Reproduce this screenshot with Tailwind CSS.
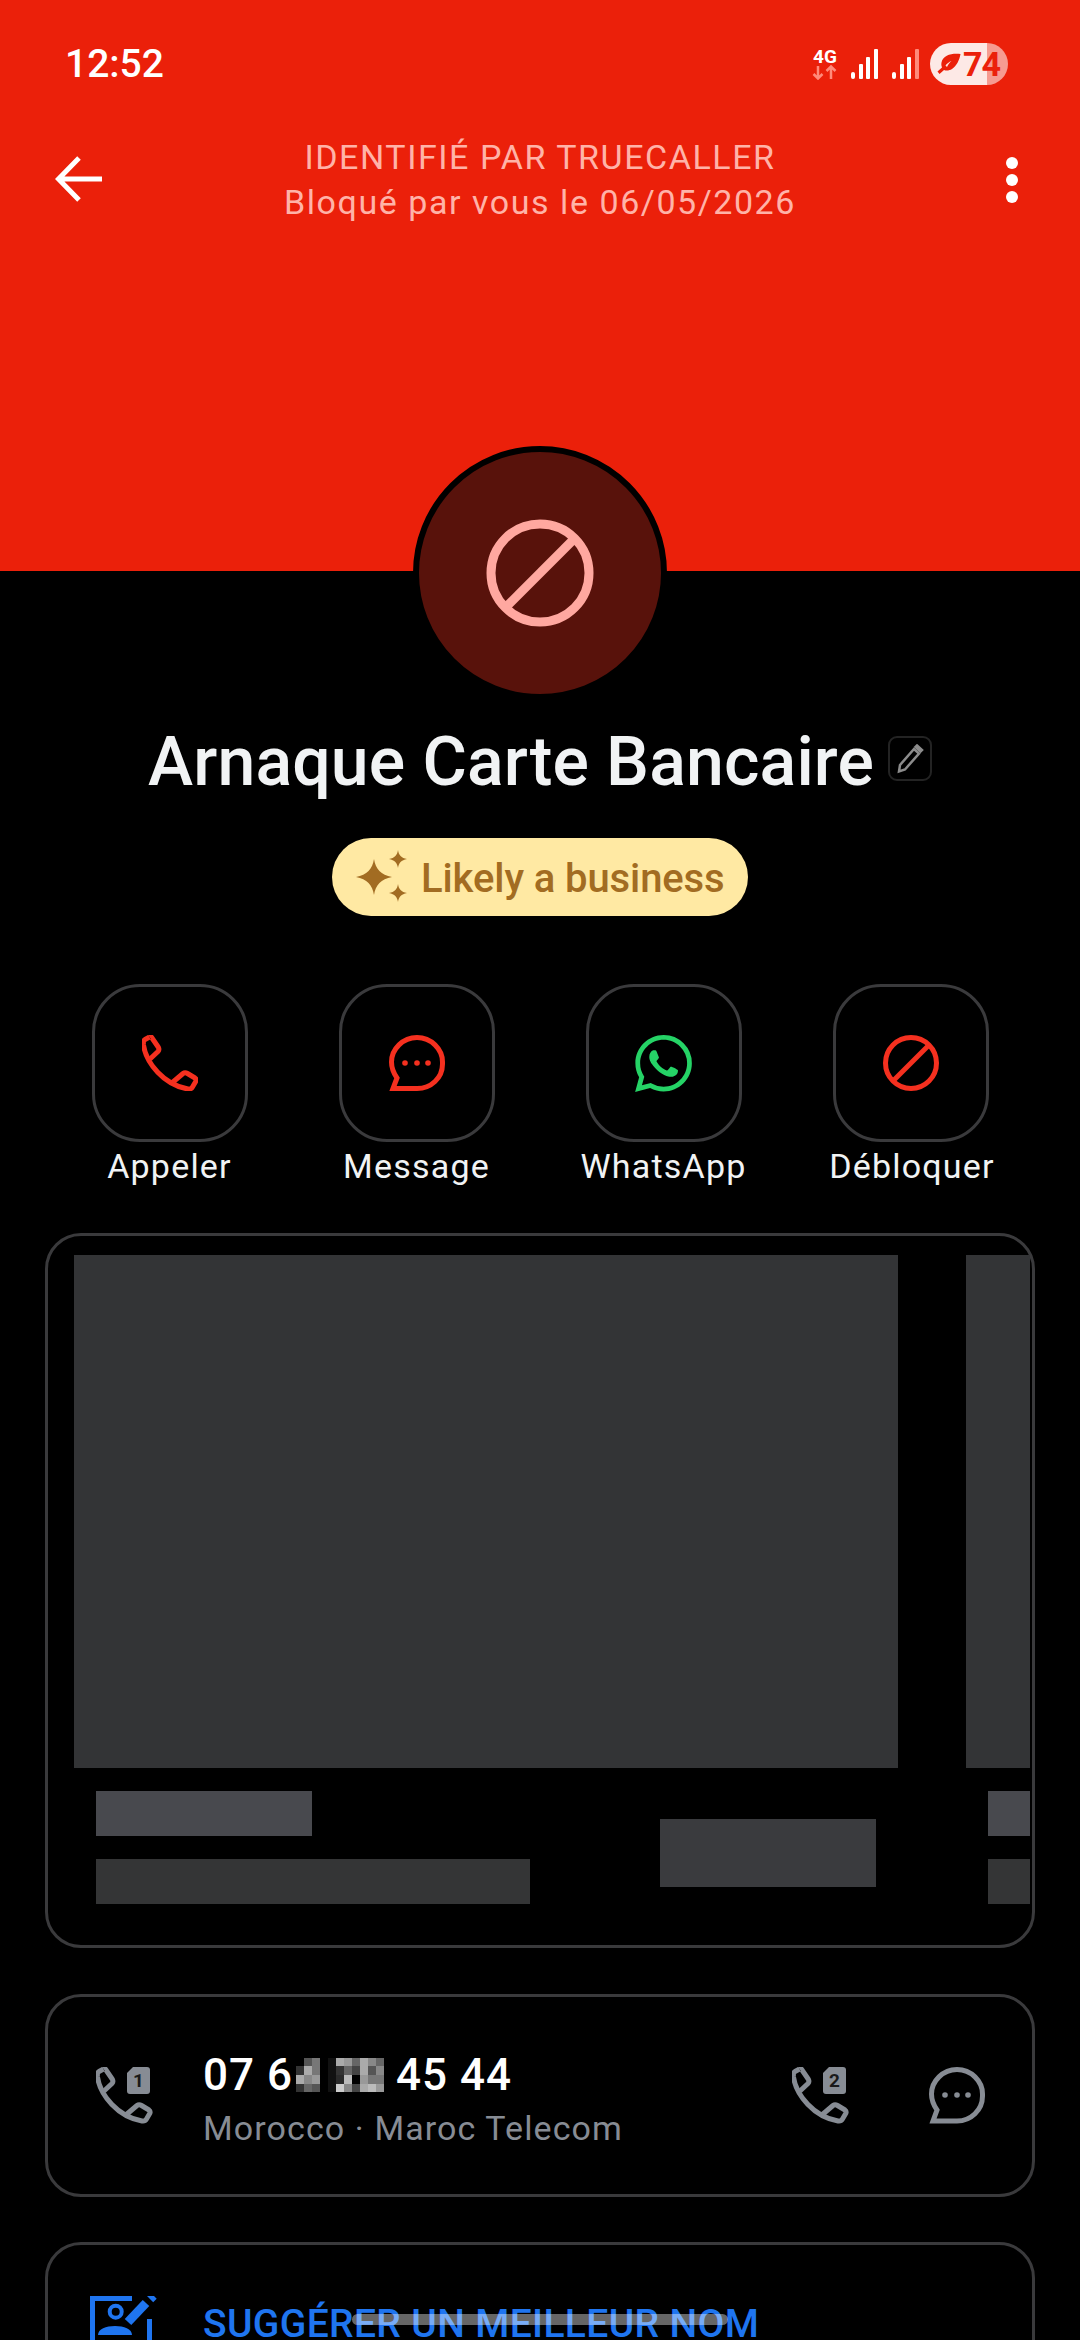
<!DOCTYPE html>
<html lang="fr">
<head>
  <meta charset="UTF-8" />
  <meta name="viewport" content="width=device-width, initial-scale=1.0"/>
  <title>Arnaque Carte Bancaire</title>
  <script src="https://cdn.jsdelivr.net/npm/@tailwindcss/browser@4"></script>
</head>
<body class="bg-black font-['Roboto',sans-serif]">
<div class="relative w-[1080px] h-[2340px] overflow-hidden bg-black text-white">

  <!-- HEADER -->
  <header class="h-[571px] bg-[#eb200a]">
    <!-- status bar -->
    <div class="flex justify-between items-start pt-[43px] pl-[65px] pr-[72px] h-[85px]">
      <span class="text-[39px] leading-[42px] font-medium">12:52</span>
      <div class="flex items-center h-[42px]">
        <div class="flex flex-col items-center w-[26px]">
          <span class="text-[19px] leading-[17px] font-bold">4G</span>
          <svg width="26" height="15" viewBox="0 0 26 15" fill="none" stroke="#ff8a7a" stroke-width="2.500">
            <path d="M6 1v12M1.500 9l4.500 4.500L10.500 9M19 14V2M14.500 6L19 1.500 23.500 6"/>
          </svg>
        </div>
        <svg class="ml-[13px]" width="27" height="30" viewBox="0 0 27 30" fill="#fff">
          <rect x="0" y="23" width="4" height="7" rx="2"/><rect x="8" y="15" width="4" height="15" rx="1"/><rect x="15" y="8" width="4" height="22" rx="1"/><rect x="23" y="0" width="4" height="30" rx="1"/>
        </svg>
        <svg class="ml-[14px]" width="27" height="30" viewBox="0 0 27 30" fill="#fff">
          <rect x="0" y="23" width="4" height="7" rx="2"/><rect x="8" y="15" width="4" height="15" rx="1"/><rect x="15" y="8" width="4" height="22" rx="1"/><rect x="23" y="0" width="4" height="30" rx="1" fill="#ff8a7a"/>
        </svg>
        <div class="relative ml-[11px] w-[78px] h-[42px] rounded-full overflow-hidden flex">
          <div class="w-[57px] bg-white/90"></div>
          <div class="flex-1 bg-white/55"></div>
          <div class="absolute inset-0 flex items-center pl-[7px] text-[#eb200a]">
            <svg width="24" height="22" viewBox="0 0 24 22" fill="currentColor">
              <path d="M23.500 1C15 0 6 2 4.500 9.500c-.4 2 0 3.500.5 5L.500 18.500 2.500 21 7 17c2.500 1 5.500.5 8-1C19.500 13 22.500 7 23.500 1zM8.500 12.500c1.500-2 3.500-3.500 6-4.500-2 1.500-3.500 3.500-4.500 6z"/>
            </svg>
            <span class="ml-[2px] text-[34px] leading-none font-bold tracking-[-1px]">74</span>
          </div>
        </div>
      </div>
    </div>
    <!-- toolbar -->
    <div class="relative flex items-center justify-center mt-[50px] h-[90px]">
      <svg class="absolute left-[55px] top-[20px]" width="48" height="48" viewBox="0 0 48 48" fill="none" stroke="#fff" stroke-width="5">
        <path d="M47 24H4M24 3L3.500 24 24 45"/>
      </svg>
      <div class="text-center text-[34px] leading-[45px] tracking-[1.550px] text-[#ffb3a8]">
        <div>IDENTIFIÉ PAR TRUECALLER</div>
        <div>Bloqué par vous le 06/05/2026</div>
      </div>
      <div class="absolute left-[1006px] top-[22px] flex flex-col gap-[5px]">
        <span class="block w-[12px] h-[12px] rounded-full bg-white"></span>
        <span class="block w-[12px] h-[12px] rounded-full bg-white"></span>
        <span class="block w-[12px] h-[12px] rounded-full bg-white"></span>
      </div>
    </div>
  </header>

  <!-- AVATAR -->
  <div class="-mt-[125px] mx-auto w-[254px] h-[254px] rounded-full border-[6px] border-black bg-[#58120b] flex items-center justify-center">
    <svg width="108" height="108" viewBox="0 0 108 108" fill="none" stroke="#ffa8a0" stroke-width="9">
      <circle cx="54" cy="54" r="49"/><path d="M20 88L88 20"/>
    </svg>
  </div>

  <!-- NAME -->
  <div class="flex items-center justify-center gap-[14px] mt-[23px] h-[78px]">
    <h1 class="text-[68px] leading-[78px] font-medium tracking-[0.150px] text-[#f1f3f4]">Arnaque Carte Bancaire</h1>
    <div class="w-[44px] h-[45px] rounded-[9px] border-2 border-[#232323] flex items-center justify-center -mt-[7px]">
      <svg width="28" height="30" viewBox="0 0 28 30" fill="none" stroke="#8c8c8c" stroke-width="2.500">
        <path d="M4 21L18 5l5 4.500L9 25.500l-6 2z"/><path d="M21 1.500l5 4.500-1.500 1.500-5-4.500z" fill="#8c8c8c"/>
      </svg>
    </div>
  </div>

  <!-- BADGE -->
  <div class="flex justify-center mt-[37px]">
    <div class="h-[78px] w-[416px] rounded-full bg-[#ffe9a3] flex items-center pl-[24px] text-[#a26c22]">
      <svg width="56" height="54" viewBox="0 0 56 54" fill="currentColor">
        <path d="M18 9c1.500 10 7 16 18 18-11 2-16.500 8-18 18-1.500-10-7-16-18-18 11-2 16.500-8 18-18z"/>
        <path d="M42 0c.7 5 3.300 8 9 9-5.700 1-8.300 4-9 9-.7-5-3.300-8-9-9 5.700-1 8.300-4 9-9z"/>
        <path d="M42 34c.7 5 3.300 8 9 9-5.700 1-8.300 4-9 9-.7-5-3.300-8-9-9 5.700-1 8.300-4 9-9z"/>
      </svg>
      <span class="ml-[9px] mt-[3px] text-[40px] leading-none font-medium tracking-[-0.100px]">Likely a business</span>
    </div>
  </div>

  <!-- ACTIONS -->
  <div class="grid grid-cols-4 px-[46px] mt-[68px]">
    <div class="flex flex-col items-center">
      <div class="w-[156px] h-[158px] rounded-[48px] border-[3px] border-[#3a3a3c] flex items-center justify-center">
        <svg width="56" height="56" viewBox="0 0 56 56" fill="none" stroke="#f5301f" stroke-width="5" stroke-linejoin="round">
          <path d="M7.500 2Q9 1 10 3L16.500 12.500Q17.500 14.500 16 16.500L8 24"/>
          <path d="M7.500 2L3 4.500Q1 5.500 1.500 10C4 28 22 50 46 54Q49 54.500 50.500 52L54 46Q54.500 44 53 43L45.500 38.500Q43 37 41 38.500L31 47"/>
        </svg>
      </div>
      <span class="mt-[4px] text-[34px] leading-[40px] tracking-[1.200px] text-[#f1f3f4]">Appeler</span>
    </div>
    <div class="flex flex-col items-center">
      <div class="w-[156px] h-[158px] rounded-[48px] border-[3px] border-[#3a3a3c] flex items-center justify-center">
        <svg width="56" height="56" viewBox="0 0 56 56" fill="none" stroke="#f5301f" stroke-width="5">
          <path d="M28 2.500C42 2.500 53.500 14 53.500 27V29C53.500 43 42 53.500 28 53.500H4L8 43C4.500 38 2.500 33 2.500 27C2.500 14 14 2.500 28 2.500Z"/>
          <g fill="#f5301f" stroke="none"><circle cx="16" cy="28" r="2.800"/><circle cx="28" cy="28" r="2.800"/><circle cx="39" cy="28" r="2.800"/></g>
        </svg>
      </div>
      <span class="mt-[4px] text-[34px] leading-[40px] tracking-[1.200px] text-[#f1f3f4]">Message</span>
    </div>
    <div class="flex flex-col items-center">
      <div class="w-[156px] h-[158px] rounded-[48px] border-[3px] border-[#3a3a3c] flex items-center justify-center">
        <svg width="57" height="57" viewBox="0 0 24 24" fill="#25d366">
          <path d="M17.472 14.382c-.297-.149-1.758-.867-2.03-.967-.273-.099-.471-.148-.67.15-.197.297-.767.966-.94 1.164-.173.199-.347.223-.644.075-.297-.15-1.255-.463-2.39-1.475-.883-.788-1.48-1.761-1.653-2.059-.173-.297-.018-.458.13-.606.134-.133.298-.347.446-.52.149-.174.198-.298.298-.497.099-.198.05-.371-.025-.52-.075-.149-.669-1.612-.916-2.207-.242-.579-.487-.5-.669-.51-.173-.008-.371-.01-.57-.01-.198 0-.52.074-.792.372-.272.297-1.04 1.016-1.04 2.479 0 1.462 1.065 2.875 1.213 3.074.149.198 2.096 3.2 5.077 4.487.709.306 1.262.489 1.694.625.712.227 1.36.195 1.871.118.571-.085 1.758-.719 2.006-1.413.248-.694.248-1.289.173-1.413-.074-.124-.272-.198-.57-.347m-5.421 7.403h-.004a9.87 9.87 0 01-5.031-1.378l-.361-.214-3.741.982.998-3.648-.235-.374a9.86 9.86 0 01-1.51-5.26c.001-5.45 4.436-9.884 9.888-9.884 2.64 0 5.122 1.03 6.988 2.898a9.825 9.825 0 012.893 6.994c-.003 5.45-4.437 9.884-9.885 9.884m8.413-18.297A11.815 11.815 0 0012.05 0C5.495 0 .16 5.335.157 11.892c0 2.096.547 4.142 1.588 5.945L.057 24l6.305-1.654a11.882 11.882 0 005.683 1.448h.005c6.554 0 11.89-5.335 11.893-11.893a11.821 11.821 0 00-3.48-8.413z"/>
        </svg>
      </div>
      <span class="mt-[4px] text-[34px] leading-[40px] tracking-[1.200px] text-[#f1f3f4]">WhatsApp</span>
    </div>
    <div class="flex flex-col items-center">
      <div class="w-[156px] h-[158px] rounded-[48px] border-[3px] border-[#3a3a3c] flex items-center justify-center">
        <svg width="56" height="56" viewBox="0 0 56 56" fill="none" stroke="#f5301f" stroke-width="5">
          <circle cx="28" cy="28" r="25.500"/><path d="M11 45L45 11"/>
        </svg>
      </div>
      <span class="mt-[4px] pl-[3px] text-[34px] leading-[40px] tracking-[1.200px] text-[#f1f3f4]">Débloquer</span>
    </div>
  </div>

  <!-- REDACTED CAROUSEL -->
  <section class="mx-[45px] mt-[47px] h-[715px] rounded-[36px] border-[3px] border-[#3a3a3c] pt-[19px] pr-[2px]">
    <div class="flex gap-[68px] overflow-hidden pl-[26px]">
      <div class="w-[824px] shrink-0">
        <div class="h-[513px] bg-[#333436]"></div>
        <div class="flex justify-between px-[22px] pt-[23px]">
          <div class="flex flex-col gap-[23px]">
            <div class="w-[216px] h-[45px] bg-[#48494e]"></div>
            <div class="w-[434px] h-[45px] bg-[#343536]"></div>
          </div>
          <div class="w-[216px] h-[68px] mt-[28px] bg-[#3a3b3e]"></div>
        </div>
      </div>
      <div class="w-[824px] shrink-0">
        <div class="h-[513px] bg-[#333436]"></div>
        <div class="flex justify-between px-[22px] pt-[23px]">
          <div class="flex flex-col gap-[23px]">
            <div class="w-[216px] h-[45px] bg-[#48494e]"></div>
            <div class="w-[434px] h-[45px] bg-[#343536]"></div>
          </div>
          <div class="w-[216px] h-[68px] mt-[28px] bg-[#3a3b3e]"></div>
        </div>
      </div>
    </div>
  </section>

  <!-- NUMERO -->
  <section class="mx-[45px] mt-[46px] h-[203px] rounded-[36px] border-[3px] border-[#3a3a3c] flex items-center pl-[48px] pr-[47px]">
    <svg class="shrink-0" width="57" height="57" viewBox="0 0 57 57" fill="none" stroke="#878c94" stroke-width="5" stroke-linejoin="round">
      <path d="M7.500 2Q9 1 10 3L16.500 12.500Q17.500 14.500 16 16.500L8 24"/>
      <path d="M7.500 2L3 4.500Q1 5.500 1.500 10C4 28 22 50 46 54Q49 54.500 50.500 52L54 46Q54.500 44 53 43L45.500 38.500Q43 37 41 38.500L31 47"/>
      <path d="M37 0H51Q54 0 54 3V24Q54 27 51 27H34Q31 27 31 24V6Z" fill="#878c94" stroke="none"/>
      <text x="42.500" y="20" text-anchor="middle" font-family="Roboto" font-weight="700" font-size="19" fill="#1a1a1a" stroke="none">1</text>
    </svg>
    <div class="ml-[50px] mt-[7px] flex-1">
      <div class="flex items-center text-[44px] leading-[50px] font-medium tracking-[1px]">
        <span>07 6</span>
        <svg class="ml-[3px]" width="88" height="34" viewBox="0 0 88 34">
          <g>
            <rect x="8" y="0" width="8" height="8" fill="#555"/><rect x="16" y="0" width="8" height="8" fill="#777"/>
            <rect x="0" y="8" width="8" height="9" fill="#333"/><rect x="8" y="8" width="8" height="9" fill="#aaa"/><rect x="16" y="8" width="8" height="9" fill="#777"/>
            <rect x="0" y="17" width="8" height="9" fill="#aaa"/><rect x="8" y="17" width="8" height="9" fill="#888"/><rect x="16" y="17" width="8" height="9" fill="#999"/>
            <rect x="0" y="26" width="8" height="8" fill="#333"/><rect x="8" y="26" width="8" height="8" fill="#666"/><rect x="16" y="26" width="8" height="8" fill="#555"/>
          </g>
          <g>
            <rect x="32" y="0" width="8" height="8" fill="#111"/><rect x="40" y="0" width="8" height="8" fill="#aaa"/><rect x="48" y="0" width="8" height="8" fill="#999"/><rect x="56" y="0" width="8" height="8" fill="#666"/><rect x="64" y="0" width="8" height="8" fill="#aaa"/><rect x="72" y="0" width="8" height="8" fill="#888"/><rect x="80" y="0" width="8" height="8" fill="#666"/>
            <rect x="32" y="8" width="8" height="9" fill="#111"/><rect x="40" y="8" width="8" height="9" fill="#333"/><rect x="48" y="8" width="8" height="9" fill="#666"/><rect x="56" y="8" width="8" height="9" fill="#444"/><rect x="64" y="8" width="8" height="9" fill="#aaa"/><rect x="72" y="8" width="8" height="9" fill="#555"/><rect x="80" y="8" width="8" height="9" fill="#888"/>
            <rect x="32" y="17" width="8" height="9" fill="#111"/><rect x="40" y="17" width="8" height="9" fill="#2a2a2a"/><rect x="48" y="17" width="8" height="9" fill="#bbb"/><rect x="56" y="17" width="8" height="9" fill="#000"/><rect x="64" y="17" width="8" height="9" fill="#999"/><rect x="72" y="17" width="8" height="9" fill="#777"/><rect x="80" y="17" width="8" height="9" fill="#777"/>
            <rect x="32" y="26" width="8" height="8" fill="#111"/><rect x="40" y="26" width="8" height="8" fill="#ccc"/><rect x="48" y="26" width="8" height="8" fill="#888"/><rect x="56" y="26" width="8" height="8" fill="#444"/><rect x="64" y="26" width="8" height="8" fill="#aaa"/><rect x="72" y="26" width="8" height="8" fill="#bbb"/><rect x="80" y="26" width="8" height="8" fill="#999"/>
          </g>
        </svg>
        <span class="ml-[12px]">45 44</span>
      </div>
      <div class="mt-[8px] text-[34px] leading-[40px] tracking-[1.100px] text-[#878c94]">Morocco · Maroc Telecom</div>
    </div>
    <svg class="shrink-0" width="57" height="57" viewBox="0 0 57 57" fill="none" stroke="#878c94" stroke-width="5" stroke-linejoin="round">
      <path d="M7.500 2Q9 1 10 3L16.500 12.500Q17.500 14.500 16 16.500L8 24"/>
      <path d="M7.500 2L3 4.500Q1 5.500 1.500 10C4 28 22 50 46 54Q49 54.500 50.500 52L54 46Q54.500 44 53 43L45.500 38.500Q43 37 41 38.500L31 47"/>
      <path d="M37 0H51Q54 0 54 3V24Q54 27 51 27H34Q31 27 31 24V6Z" fill="#878c94" stroke="none"/>
      <text x="42.500" y="20" text-anchor="middle" font-family="Roboto" font-weight="700" font-size="19" fill="#1a1a1a" stroke="none">2</text>
    </svg>
    <svg class="ml-[80px] shrink-0" width="56" height="57" viewBox="0 0 56 57" fill="none" stroke="#878c94" stroke-width="5">
      <path d="M28 2.500C42 2.500 53.500 14 53.500 27V29C53.500 43 42 54 28 54H4L8 43C4.500 38 2.500 33 2.500 27C2.500 14 14 2.500 28 2.500Z"/>
      <g fill="#878c94" stroke="none"><circle cx="16" cy="28" r="2.800"/><circle cx="28" cy="28" r="2.800"/><circle cx="39" cy="28" r="2.800"/></g>
    </svg>
  </section>

  <!-- SUGGESTION -->
  <section class="mx-[45px] mt-[45px] h-[200px] rounded-[36px] border-[3px] border-[#3a3a3c] flex items-start pl-[42px] pt-[51px]">
    <svg class="shrink-0" width="68" height="60" viewBox="0 0 68 60" fill="none" stroke="#1f75f0" stroke-width="5">
      <path d="M42 2.500H2.500V60M59.500 23V60"/>
      <circle cx="25.700" cy="15.700" r="6" stroke-width="4"/>
      <path d="M8 39C8 33 16 30 25 30S42 33 42 39Z" fill="#1f75f0" stroke="none"/>
      <path d="M38 26L56 7" stroke-width="9"/>
      <path d="M60 3L63.500 -.5" stroke-width="9"/>
    </svg>
    <span class="ml-[45px] mt-[3px] text-[39px] leading-[50px] font-medium tracking-[0.350px] text-[#1f75f0] whitespace-nowrap">SUGGÉRER UN MEILLEUR NOM</span>
  </section>

  <!-- gesture bar over content -->
  <div class="absolute left-[352px] top-[2314px] w-[376px] h-[11px] rounded-full bg-white/40"></div>
</div>
</body>
</html>
